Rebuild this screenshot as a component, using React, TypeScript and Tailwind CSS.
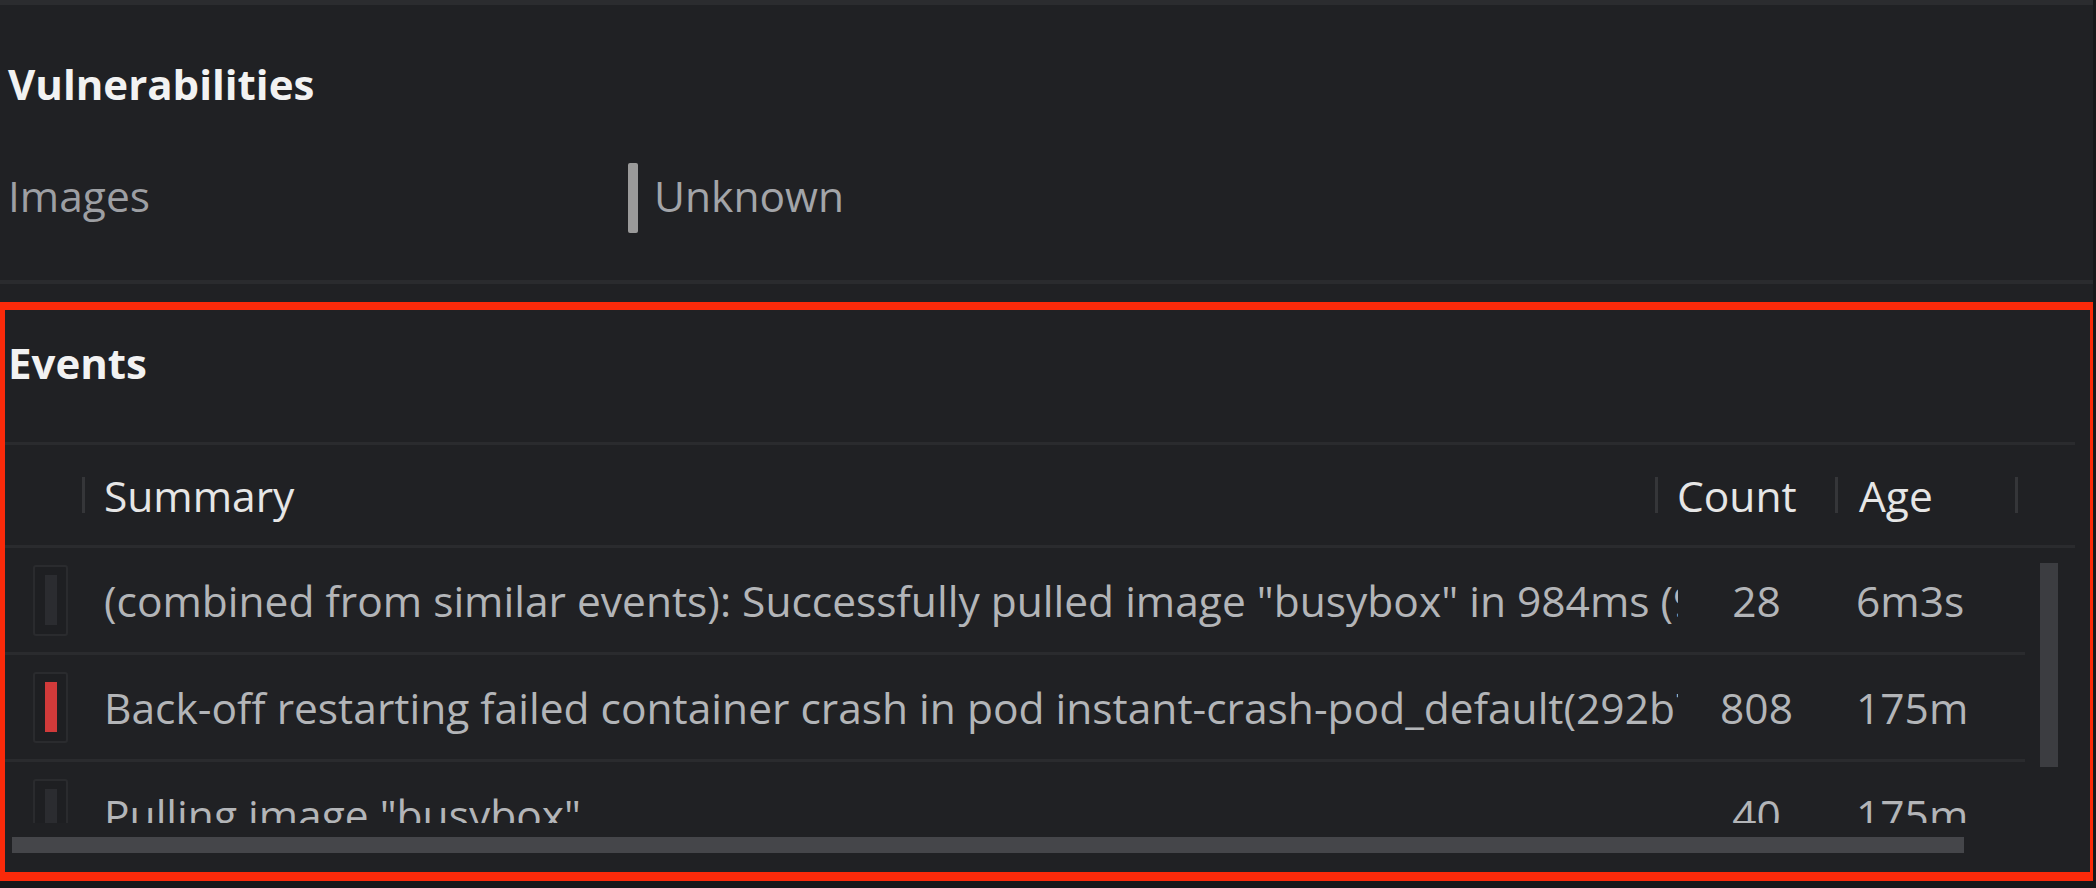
type EventRow = {
  summary: string;
  count: number;
  age: string;
  warning?: boolean;
};

const events: EventRow[] = [
  {
    summary:
      '(combined from similar events): Successfully pulled image "busybox" in 984ms (984ms including waiting)',
    count: 28,
    age: "6m3s",
  },
  {
    summary:
      "Back-off restarting failed container crash in pod instant-crash-pod_default(292b7c1e-4d5a-4f8e-9a3b-6c1d2e0f8a71)",
    count: 808,
    age: "175m",
    warning: true,
  },
  {
    summary: 'Pulling image "busybox"',
    count: 40,
    age: "175m",
  },
];

function ColSep() {
  return <div className="h-[36px] w-[3px] shrink-0 bg-[#353639]" />;
}

function HeaderCell({ label, className }: { label?: string; className: string }) {
  return (
    <div className={`flex h-full items-center ${className}`}>
      <ColSep />
      {label && <span className="pl-[19px] text-[#e6e6e6]">{label}</span>}
    </div>
  );
}

function TypeIcon({ warning }: { warning?: boolean }) {
  return (
    <div className="flex h-[71px] w-[35px] items-center justify-center rounded-[3px] border-2 border-[#2a2b2e] bg-[#1e1f22]">
      <div className={`h-[50px] w-[12px] ${warning ? "bg-[#d13a3a]" : "bg-[#2b2c30]"}`} />
    </div>
  );
}

export default function App() {
  return (
    <div
      className="h-[888px] w-[2096px] overflow-hidden bg-[#17181a] text-[42.5px]"
      style={{ fontFamily: '"Open Sans", "Noto Sans", sans-serif' }}
    >
      <div className="w-[2093px] bg-[#202124]">
        <div className="h-[5px] bg-[#2b2c2f]" />

        {/* Vulnerabilities */}
        <div className="pl-[8px] pt-[50px]">
          <h2 className="text-[42px] font-bold leading-[57px] text-[#f2f2f2]">Vulnerabilities</h2>
          <div className="mt-[51px] flex h-[70px] items-center leading-[57px]">
            <span className="w-[620px] pb-[6px] text-[#9d9fa3]">Images</span>
            <div className="h-[70px] w-[10px] rounded-[2px] bg-[#9a9a9a]" />
            <span className="pb-[6px] pl-[16px] text-[#a3a5a9]">Unknown</span>
          </div>
        </div>
        <div className="mt-[47px] h-[4px] bg-[#2a2b2e]" />
        <div className="h-[18px]" />

        {/* Events */}
        <div className="h-[579px] border-b-[9px] border-l-[5px] border-r-[3px] border-t-[8px] border-[#fa2a0a]">
          <h2 className="pl-[3px] pt-[24px] text-[42px] font-bold leading-[57px] text-[#f2f2f2]">Events</h2>

          <div className="mt-[51px] w-[2070px]">
            <div className="flex h-[106px] border-b-[3px] border-t-[3px] border-[#2a2b2e] leading-[57px]">
              <div className="w-[77px] shrink-0" />
              <HeaderCell label="Summary" className="w-[1573px] shrink-0" />
              <HeaderCell label="Count" className="w-[180px] shrink-0" />
              <HeaderCell label="Age" className="w-[180px] shrink-0 [&>span]:pl-[21px]" />
              <HeaderCell className="flex-1" />
            </div>

            <div className="flex h-[275px] overflow-hidden">
              <div className="w-[2020px] shrink-0">
                {events.map((e, i) => (
                  <div
                    key={i}
                    className="flex h-[107px] items-center border-b-[3px] border-[#2a2b2e] leading-[57px] text-[#b3b5b8]"
                  >
                    <div className="w-[77px] shrink-0 pl-[28px]">
                      <TypeIcon warning={e.warning} />
                    </div>
                    <div className="w-[1596px] shrink-0 overflow-hidden whitespace-nowrap pl-[22px]">
                      {e.summary}
                    </div>
                    <div className="w-[157px] shrink-0 text-center">{e.count}</div>
                    <div className="w-[180px] shrink-0 pl-[21px]">{e.age}</div>
                  </div>
                ))}
              </div>
              <div className="flex-1 pl-[15px] pt-[15px]">
                <div className="h-[204px] w-[18px] bg-[#3c3d41]" />
              </div>
            </div>

            <div className="h-[49px] pl-[7px] pt-[14px]">
              <div className="h-[16px] w-[1952px] bg-[#45464a]" />
            </div>
          </div>
        </div>
      </div>
    </div>
  );
}
